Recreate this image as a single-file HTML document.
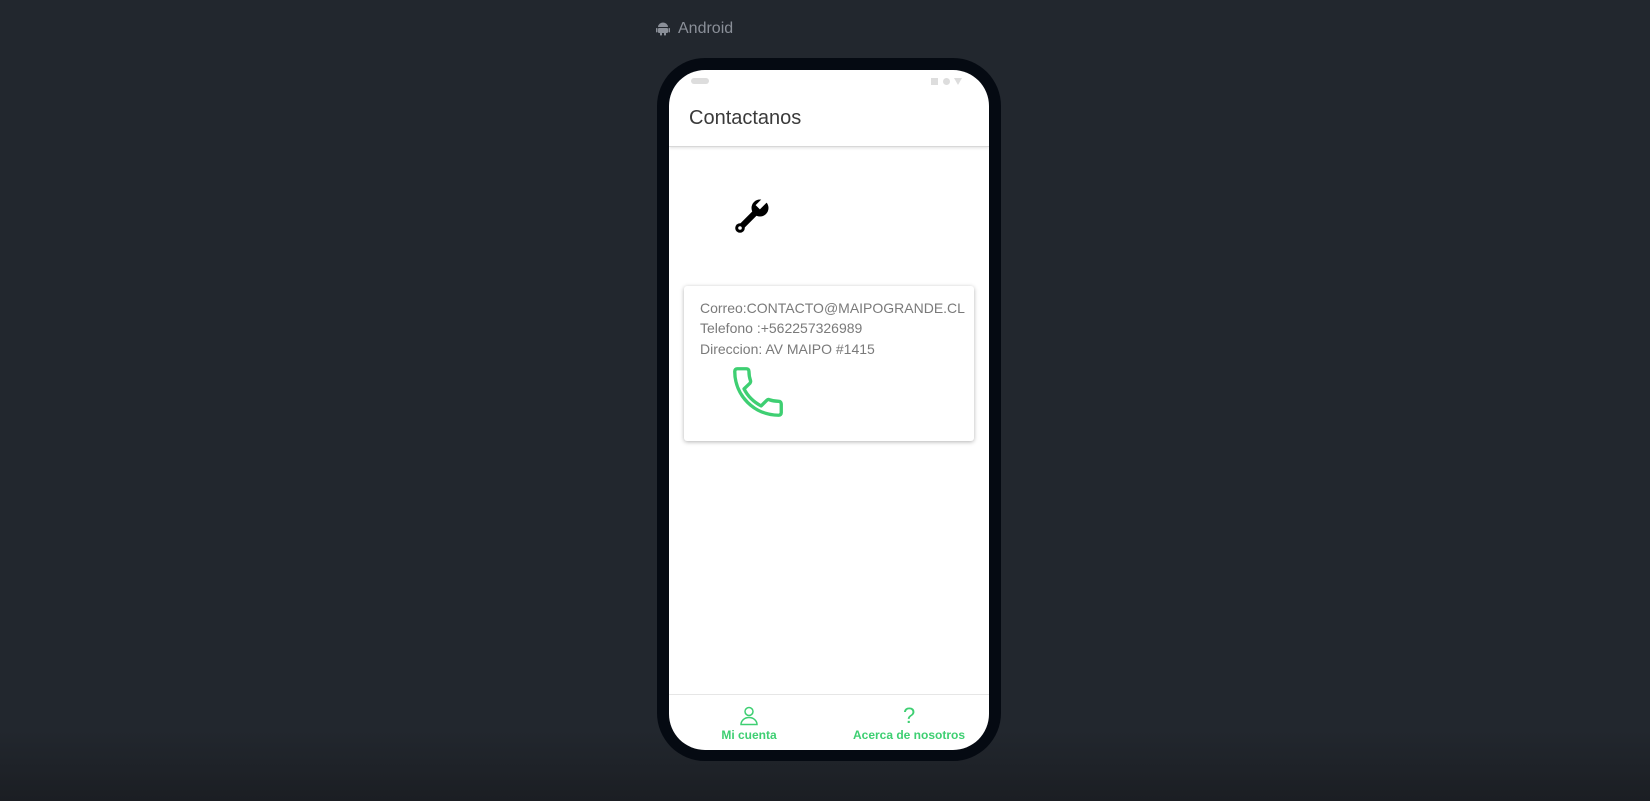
<!DOCTYPE html>
<html><head><meta charset="utf-8"><style>
html,body{margin:0;padding:0}
body{width:1650px;height:801px;overflow:hidden;position:relative;font-family:"Liberation Sans",Arial,sans-serif;
background:linear-gradient(to bottom,#22272e 0px,#22272e 730px,#1b1e23 801px);}
.lbl{position:absolute;left:656px;top:20px;color:#8a8f98;font-size:16px;display:flex;align-items:center;gap:8px}
.phone{position:absolute;left:657px;top:58px;width:344px;height:703px;background:#050a12;border-radius:48px}
.screen{position:absolute;left:12px;top:12px;width:320px;height:680px;background:#fff;border-radius:36px;overflow:hidden}
.hdr{position:absolute;left:0;top:0;width:320px;height:76px;border-bottom:1px solid #d8d8d8;box-shadow:0 1px 3px rgba(0,0,0,.12)}
.title{position:absolute;left:20px;top:37px;font-size:20px;color:#3a3a3a}
.card{position:absolute;left:15px;top:216px;width:290px;height:155px;border-radius:3px;box-shadow:0 1px 4px rgba(0,0,0,.3);background:#fff}
.card p{margin:0;position:absolute;left:16px;font-size:14px;color:#7a7a7a}
.nav{position:absolute;left:0;top:624px;width:320px;height:56px;border-top:1px solid #e6e6e6}
.nl{position:absolute;top:33px;font-size:12px;font-weight:bold;color:#3ecf72;transform:translateX(-50%);white-space:nowrap}
</style></head><body>
<div class="lbl"><svg width="14" height="14" viewBox="0 0 14 14" fill="#8a8f98"><path d="M2 5a5 4.5 0 0 1 10 0z"/><rect x="2" y="6" width="10" height="5" rx="1"/><rect x="0" y="6" width="1.5" height="4.5" rx=".7"/><rect x="12.5" y="6" width="1.5" height="4.5" rx=".7"/><rect x="4" y="10" width="2" height="3.5" rx=".8"/><rect x="8" y="10" width="2" height="3.5" rx=".8"/></svg>Android</div>
<div class="phone"><div class="screen">
<div style="position:absolute;left:22px;top:8px;width:18px;height:6px;border-radius:3px;background:#ddd"></div>
<div style="position:absolute;left:262px;top:8px;width:7px;height:7px;background:#ddd"></div>
<div style="position:absolute;left:274px;top:8px;width:7px;height:7px;border-radius:50%;background:#ddd"></div>
<div style="position:absolute;left:285px;top:8px;width:0;height:0;border-left:4px solid transparent;border-right:4px solid transparent;border-top:7px solid #ddd"></div>
<div class="hdr"><div class="title">Contactanos</div></div>
<svg style="position:absolute;left:64px;top:128px" width="37" height="37" viewBox="0 0 37 37">
<line x1="7" y1="30" x2="24" y2="13" stroke="#000" stroke-width="6" stroke-linecap="round"/>
<circle cx="7" cy="30" r="4.8" fill="#000"/>
<circle cx="7" cy="30" r="1.8" fill="#fff"/>
<circle cx="27" cy="10" r="8.5" fill="#000"/>
<rect x="26" y="-1" width="6" height="12" fill="#fff" transform="rotate(45 29 5)"/>
</svg>
<div class="card">
<p style="top:14px">Correo:CONTACTO@MAIPOGRANDE.CL</p>
<p style="top:34px">Telefono :+562257326989</p>
<p style="top:55px">Direccion: AV MAIPO #1415</p>
<svg style="position:absolute;left:43px;top:75px" width="62" height="62" viewBox="0 0 24 24"><path fill="none" stroke="#3ecf72" stroke-width="1.3" stroke-linejoin="round" d="M6.6 10.8c1.4 2.8 3.8 5.1 6.6 6.6l2.2-2.2c.3-.3.7-.4 1-.2 1.1.4 2.3.6 3.6.6.6 0 1 .4 1 1V20c0 .6-.4 1-1 1C10.6 21 3 13.4 3 4c0-.6.4-1 1-1h3.5c.6 0 1 .4 1 1 0 1.3.2 2.5.6 3.6.1.3 0 .7-.2 1z"/></svg>
</div>
<div class="nav">
<svg style="position:absolute;left:70px;top:11px" width="20" height="20" viewBox="0 0 20 20" fill="none" stroke="#3ecf72" stroke-width="1.5"><circle cx="10" cy="5.5" r="4"/><path d="M2 18.5a8 7 0 0 1 16 0z"/></svg>
<div style="position:absolute;left:234px;top:8px;font-size:22px;color:#3ecf72;">?</div>
<div class="nl" style="left:240px">Acerca de nosotros</div>
<div class="nl" style="left:80px">Mi cuenta</div>
</div>
</div></div>
</body></html>
